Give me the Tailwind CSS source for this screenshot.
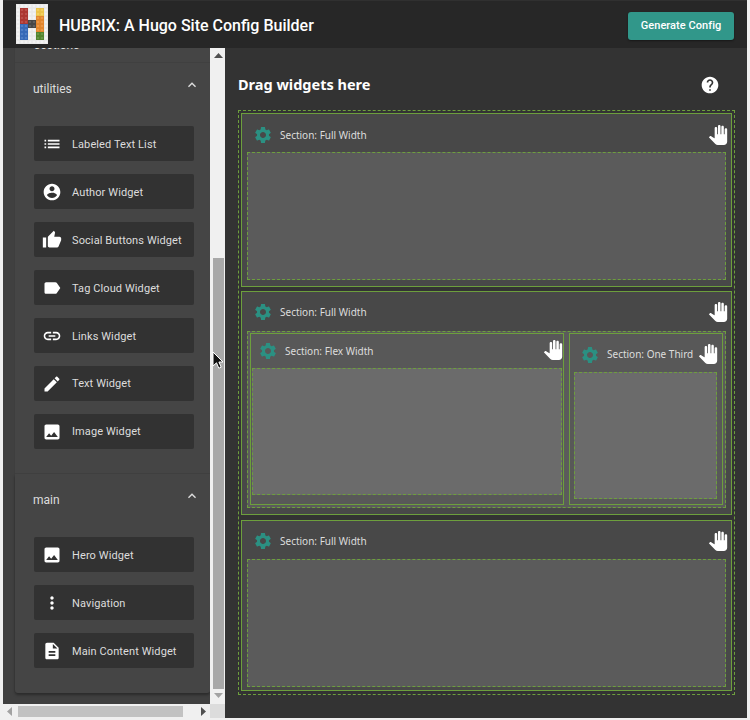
<!DOCTYPE html>
<html><head><meta charset="utf-8"><script src="https://cdn.jsdelivr.net/npm/@tailwindcss/browser@4"></script></head>
<body class="m-0 bg-[#f0f0f0]">
<svg width="0" height="0" class="absolute"><defs>
<symbol id="hand" viewBox="0 0 24 24"><path d="M23 5.5V20c0 2.2-1.8 4-4 4h-7.3c-1.08 0-2.1-.43-2.85-1.19L1 14.83s1.26-1.23 1.3-1.25c.22-.19.49-.29.79-.29.22 0 .42.06.6.16.04.01 4.31 2.46 4.31 2.46V4c0-.83.67-1.5 1.5-1.5S11 3.17 11 4v7h1V1.5c0-.83.67-1.5 1.5-1.5S15 .67 15 1.5V11h1V2.5c0-.83.67-1.5 1.5-1.5s1.5.67 1.5 1.5V11h1V5.5c0-.83.67-1.5 1.5-1.5s1.5.67 1.5 1.5z"/></symbol>
<symbol id="gear" viewBox="0 0 24 24"><path d="M19.14 12.94c.04-.3.06-.61.06-.94 0-.32-.02-.64-.07-.94l2.03-1.58c.18-.14.23-.41.12-.61l-1.92-3.32c-.12-.22-.37-.29-.59-.22l-2.39.96c-.5-.38-1.03-.7-1.62-.94l-.36-2.54c-.04-.24-.24-.41-.48-.41h-3.84c-.24 0-.43.17-.47.41l-.36 2.54c-.59.24-1.13.57-1.62.94l-2.39-.96c-.22-.08-.47 0-.59.22L2.74 8.87c-.12.21-.08.47.12.61l2.03 1.58c-.05.3-.09.63-.09.94s.02.64.07.94l-2.03 1.58c-.18.14-.23.41-.12.61l1.92 3.32c.12.22.37.29.59.22l2.39-.96c.5.38 1.03.7 1.62.94l.36 2.54c.05.24.24.41.48.41h3.84c.24 0 .44-.17.47-.41l.36-2.54c.59-.24 1.13-.56 1.62-.94l2.39.96c.22.08.47 0 .59-.22l1.92-3.32c.12-.22.07-.47-.12-.61l-2.01-1.58zM12 15.6c-1.98 0-3.6-1.62-3.6-3.6s1.62-3.6 3.6-3.6 3.6 1.62 3.6 3.6-1.62 3.6-3.6 3.6z"/></symbol>
<symbol id="chev" viewBox="0 0 24 24"><path d="M12 8l-6 6 1.41 1.41L12 10.83l4.59 4.58L18 14z"/></symbol>
<symbol id="img" viewBox="0 0 24 24"><path d="M21 19V5c0-1.1-.9-2-2-2H5c-1.1 0-2 .9-2 2v14c0 1.1.9 2 2 2h14c1.1 0 2-.9 2-2zM8.5 13.5l2.5 3.01L14.5 12l4.5 6H5l3.5-4.5z"/></symbol>
</defs></svg>
<div class="relative w-[750px] h-[720px] overflow-hidden pl-[3px] pr-[3px] pb-[2px] flex flex-col bg-[#f0f0f0] font-['Roboto',sans-serif]">
  <header class="relative z-10 h-12 shrink-0 flex items-center bg-[#272727] border-t border-[#303030] pl-[13px] pr-[13px]">
    <svg class="shrink-0 -mt-[2px]" width="32" height="40" viewBox="0 0 32 40">
      <defs><pattern id="stud" width="4" height="4" patternUnits="userSpaceOnUse"><rect width="4" height="4" fill="none" stroke="#000" stroke-opacity=".05"/><circle cx="2" cy="2" r="1.1" fill="#fff" fill-opacity=".14"/></pattern></defs>
      <rect width="32" height="40" fill="#f2f2f2"/>
      <rect x="4" y="4" width="8" height="16" fill="#b23a33"/><rect x="4" y="20" width="8" height="16" fill="#3a6dbd"/>
      <rect x="12" y="16" width="8" height="8" fill="#4a4a4a"/>
      <rect x="20" y="4" width="8" height="8" fill="#f2c94c"/><rect x="20" y="12" width="8" height="16" fill="#e98a2e"/><rect x="20" y="28" width="8" height="8" fill="#55882f"/>
      <rect width="32" height="40" fill="url(#stud)"/>
    </svg>
    <h1 class="ml-[11px] mt-[3px] text-white text-[16px] font-medium leading-none">HUBRIX: A Hugo Site Config Builder</h1>
    <button class="ml-auto mt-[3px] w-[106px] h-7 rounded-[3px] bg-[#31978a] text-white text-[11px] font-medium tracking-[0.05px] shadow-[0_1px_2px_rgba(0,0,0,.4)]">Generate Config</button>
  </header>
  <div class="flex-1 flex min-h-0">
    <aside class="w-[222px] shrink-0 flex flex-col">
      <div class="flex-1 flex min-h-0">
        <div class="w-[207px] overflow-hidden bg-[#404040] pl-[11px]">
          <div class="-mt-[24px] rounded-b-[3px] bg-[#454545] text-[#ddd] border-l border-[#3e3e3e]">
            <div class="h-[39px] flex items-center justify-between pt-[4px] pl-[19px] pr-[10px] border-b border-[#404040]"><span class="text-[12px]">sections</span><svg class="fill-[#ddd] -mt-[2px]" width="16" height="16"><use href="#chev"/></svg></div>
            <section class="h-[411px] border-b border-[#404040] pl-[19px] pr-[16px]">
              <div class="h-[50px] flex items-center justify-between"><span class="text-[12px] -ml-[1px] pt-[2px]">utilities</span><svg class="fill-[#ddd] -mt-[7px] -mr-[6px]" width="16" height="16"><use href="#chev"/></svg></div>
              <ul class="mt-[13px] flex flex-col gap-[13px] text-[11px] tracking-[0.1px] text-[#ddd]">
                <li class="h-[35px] rounded-[2px] bg-[#323232] flex items-center pl-[8px] gap-[10px]"><svg class="fill-white shrink-0" width="20" height="20" viewBox="0 0 24 24"><path d="M3 13h2v-2H3v2zm0 4h2v-2H3v2zm0-8h2V7H3v2zm4 4h14v-2H7v2zm0 4h14v-2H7v2zM7 7v2h14V7H7z"/></svg><span class="pt-[3px]">Labeled Text List</span></li>
                <li class="h-[35px] rounded-[2px] bg-[#323232] flex items-center pl-[8px] gap-[10px]"><svg class="fill-white shrink-0" width="20" height="20" viewBox="0 0 24 24"><path d="M12 2C6.48 2 2 6.48 2 12s4.48 10 10 10 10-4.48 10-10S17.52 2 12 2zm0 3c1.66 0 3 1.34 3 3s-1.34 3-3 3-3-1.34-3-3 1.34-3 3-3zm0 14.2c-2.5 0-4.71-1.28-6-3.22.03-1.99 4-3.08 6-3.08 1.99 0 5.97 1.09 6 3.08-1.29 1.94-3.5 3.22-6 3.22z"/></svg><span class="pt-[3px]">Author Widget</span></li>
                <li class="h-[35px] rounded-[2px] bg-[#323232] flex items-center pl-[8px] gap-[10px]"><svg class="fill-white shrink-0" width="20" height="20" viewBox="0 0 24 24"><path d="M1 21h4V9H1v12zm22-11c0-1.1-.9-2-2-2h-6.31l.95-4.57.03-.32c0-.41-.17-.79-.44-1.06L14.17 1 7.59 7.59C7.22 7.95 7 8.45 7 9v10c0 1.1.9 2 2 2h9c.83 0 1.54-.5 1.84-1.22l3.02-7.05c.09-.23.14-.47.14-.73v-2z"/></svg><span class="pt-[3px]">Social Buttons Widget</span></li>
                <li class="h-[35px] rounded-[2px] bg-[#323232] flex items-center pl-[8px] gap-[10px]"><svg class="fill-white shrink-0" width="20" height="20" viewBox="0 0 24 24"><path d="M17.63 5.84C17.27 5.33 16.67 5 16 5L5 5.01C3.9 5.01 3 5.9 3 7v10c0 1.1.9 1.99 2 1.99L16 19c.67 0 1.27-.33 1.63-.84L22 12l-4.37-6.16z"/></svg><span class="pt-[3px]">Tag Cloud Widget</span></li>
                <li class="h-[35px] rounded-[2px] bg-[#323232] flex items-center pl-[8px] gap-[10px]"><svg class="fill-white shrink-0" width="20" height="20" viewBox="0 0 24 24"><path d="M3.9 12c0-1.71 1.39-3.1 3.1-3.1h4V7H7c-2.76 0-5 2.24-5 5s2.24 5 5 5h4v-1.9H7c-1.71 0-3.1-1.39-3.1-3.1zM8 13h8v-2H8v2zm9-6h-4v1.9h4c1.71 0 3.1 1.39 3.1 3.1s-1.39 3.1-3.1 3.1h-4V17h4c2.76 0 5-2.24 5-5s-2.24-5-5-5z"/></svg><span class="pt-[3px]">Links Widget</span></li>
                <li class="h-[35px] rounded-[2px] bg-[#323232] flex items-center pl-[8px] gap-[10px]"><svg class="fill-white shrink-0" width="20" height="20" viewBox="0 0 24 24"><path d="M3 17.25V21h3.75L17.81 9.94l-3.75-3.75L3 17.25zM20.71 7.04c.39-.39.39-1.02 0-1.41l-2.34-2.34c-.39-.39-1.02-.39-1.41 0l-1.83 1.83 3.75 3.75 1.83-1.83z"/></svg><span class="pt-[1px]">Text Widget</span></li>
                <li class="h-[35px] rounded-[2px] bg-[#323232] flex items-center pl-[8px] gap-[10px]"><svg class="fill-white shrink-0" width="20" height="20"><use href="#img"/></svg><span class="pt-[1px]">Image Widget</span></li>
              </ul>
            </section>
            <section class="h-[219px] rounded-b-[3px] shadow-[0_2px_3px_rgba(0,0,0,.35)] pl-[19px] pr-[16px]">
              <div class="h-[50px] flex items-center justify-between"><span class="text-[12px] -ml-[1px] pt-[2px]">main</span><svg class="fill-[#ddd] -mt-[7px] -mr-[6px]" width="16" height="16"><use href="#chev"/></svg></div>
              <ul class="mt-[13px] flex flex-col gap-[13px] text-[11px] tracking-[0.1px] text-[#ddd]">
                <li class="h-[35px] rounded-[2px] bg-[#323232] flex items-center pl-[8px] gap-[10px]"><svg class="fill-white shrink-0" width="20" height="20"><use href="#img"/></svg><span class="pt-[3px]">Hero Widget</span></li>
                <li class="h-[35px] rounded-[2px] bg-[#323232] flex items-center pl-[8px] gap-[10px]"><svg class="fill-white shrink-0" width="20" height="20" viewBox="0 0 24 24"><path d="M12 8c1.1 0 2-.9 2-2s-.9-2-2-2-2 .9-2 2 .9 2 2 2zm0 2c-1.1 0-2 .9-2 2s.9 2 2 2 2-.9 2-2-.9-2-2-2zm0 6c-1.1 0-2 .9-2 2s.9 2 2 2 2-.9 2-2-.9-2-2-2z"/></svg><span class="pt-[3px]">Navigation</span></li>
                <li class="h-[35px] rounded-[2px] bg-[#323232] flex items-center pl-[8px] gap-[10px]"><svg class="fill-white shrink-0" width="20" height="20" viewBox="0 0 24 24"><path d="M14 2H6c-1.1 0-1.99.9-1.99 2L4 20c0 1.1.89 2 1.99 2H18c1.1 0 2-.9 2-2V8l-6-6zm2 16H8v-2h8v2zm0-4H8v-2h8v2zm-3-5V3.5L18.5 9H13z"/></svg><span class="pt-[3px]">Main Content Widget</span></li>
              </ul>
            </section>
          </div>
        </div>
        <div class="w-[15px] bg-[#f0f0f0] flex flex-col items-center pl-[1px]">
          <svg class="mt-[5px] fill-[#505050]" width="9" height="5" viewBox="0 0 9 5"><path d="M4.5 0L9 5H0z"/></svg>
          <div class="mt-[200px] w-[11px] h-[431px] bg-[#a8a8a8]"></div>
          <svg class="mt-[4px] fill-[#a3a3a3]" width="9" height="5" viewBox="0 0 9 5"><path d="M0 0h9L4.5 5z"/></svg>
        </div>
      </div>
      <div class="h-[14px] shrink-0 flex bg-[#f0f0f0]">
        <div class="w-[207px] flex items-center pl-[4px]">
          <svg class="fill-[#a3a3a3]" width="5" height="9" viewBox="0 0 5 9"><path d="M5 0v9L0 4.5z"/></svg>
          <div class="ml-[6px] w-[165px] h-[11px] bg-[#c2c2c2]"></div>
          <svg class="ml-[18px] fill-[#505050]" width="5" height="9" viewBox="0 0 5 9"><path d="M0 0l5 4.5L0 9z"/></svg>
        </div>
        <div class="w-[15px] bg-[#dcdcdc]"></div>
      </div>
    </aside>
    <main class="flex-1 bg-[#333333] pl-[13px] pr-[12px] pt-[21px] font-['Noto_Sans',sans-serif] text-[#ddd]">
      <div class="h-[30px] mb-[11px] flex items-center justify-between pr-[15px]">
        <h2 class="text-white text-[14.5px] font-bold leading-none">Drag widgets here</h2>
        <svg class="fill-white mt-[1px]" width="20" height="20" viewBox="0 0 24 24"><path d="M12 2C6.48 2 2 6.48 2 12s4.48 10 10 10 10-4.48 10-10S17.52 2 12 2zm1 17h-2v-2h2v2zm2.07-7.75l-.9.92C13.45 12.9 13 13.5 13 15h-2v-.5c0-1.1.45-2.1 1.17-2.83l1.24-1.26c.37-.36.59-.86.59-1.41 0-1.1-.9-2-2-2s-2 .9-2 2H8c0-2.21 1.79-4 4-4s4 1.79 4 4c0 .88-.36 1.68-.93 2.25z"/></svg>
      </div>
      <div class="h-[585px] border border-dashed border-[#6d9f3d] pt-[2px] pl-[2px] pr-[2px]">
        <section class="h-[174px] mb-[4px] border border-[#6d9f3d] bg-[#484848] px-[5px]">
          <div class="h-[38px] flex items-center pt-[4px] pl-[6px]">
            <svg class="fill-[#2b9082] shrink-0" width="20" height="20"><use href="#gear"/></svg>
            <span class="ml-[7px] text-[10px]">Section: Full Width</span>
            <svg class="fill-white ml-auto -mr-[2px] -mt-[1px]" width="20" height="20"><use href="#hand"/></svg>
          </div>
          <div class="h-[128px] border border-dashed border-[#6d9f3d] bg-[#5b5b5b]"></div>
        </section>
        <section class="h-[224px] mb-[5px] border border-[#6d9f3d] bg-[#484848] px-[5px]">
          <div class="h-[39px] flex items-center pt-[1px] pl-[6px]">
            <svg class="fill-[#2b9082] shrink-0" width="20" height="20"><use href="#gear"/></svg>
            <span class="ml-[7px] text-[10px]">Section: Full Width</span>
            <svg class="fill-white ml-auto -mr-[2px] -mt-[1px]" width="20" height="20"><use href="#hand"/></svg>
          </div>
          <div class="h-[177px] border border-dashed border-[#6d9f3d] bg-[#5b5b5b] pt-[1px] pl-[2px] pr-[2px] flex gap-[5px]">
            <section class="w-[314px] h-[172px] border border-[#6d9f3d] bg-[#585858] px-[1px]">
              <div class="h-[34px] flex items-center pl-[6px]">
                <svg class="fill-[#2b9082] shrink-0" width="20" height="20"><use href="#gear"/></svg>
                <span class="ml-[7px] text-[10px]">Section: Flex Width</span>
                <svg class="fill-white ml-auto -mr-[1px] -mt-[2px]" width="20" height="20"><use href="#hand"/></svg>
              </div>
              <div class="h-[127px] border border-dashed border-[#6d9f3d] bg-[#6b6b6b]"></div>
            </section>
            <section class="w-[154px] h-[172px] border border-[#6d9f3d] bg-[#585858] pl-[4px] pr-[5px]">
              <div class="h-[38px] flex items-center pt-[3px] pl-[6px]">
                <svg class="fill-[#2b9082] shrink-0" width="20" height="20"><use href="#gear"/></svg>
                <span class="ml-[7px] text-[10px] whitespace-nowrap">Section: One Third</span>
                <svg class="fill-white shrink-0 ml-auto -mr-[1px] -mt-[2px]" width="20" height="20"><use href="#hand"/></svg>
              </div>
              <div class="h-[127px] border border-dashed border-[#6d9f3d] bg-[#6b6b6b]"></div>
            </section>
          </div>
        </section>
        <section class="h-[171px] border border-[#6d9f3d] bg-[#484848] px-[5px]">
          <div class="h-[38px] flex items-center pt-[2px] pl-[6px]">
            <svg class="fill-[#2b9082] shrink-0" width="20" height="20"><use href="#gear"/></svg>
            <span class="ml-[7px] text-[10px]">Section: Full Width</span>
            <svg class="fill-white ml-auto -mr-[2px] -mt-[1px]" width="20" height="20"><use href="#hand"/></svg>
          </div>
          <div class="h-[128px] border border-dashed border-[#6d9f3d] bg-[#5b5b5b]"></div>
        </section>
      </div>
    </main>
  </div>
  <svg class="absolute left-[212px] top-[351px] z-20" width="12" height="19" viewBox="0 0 12 19"><path d="M1 1v14l3.5-3.2 2.3 5.4 2.4-1-2.3-5.2H11z" fill="#111" stroke="#fff" stroke-width="1"/></svg>
</div>
</body></html>
